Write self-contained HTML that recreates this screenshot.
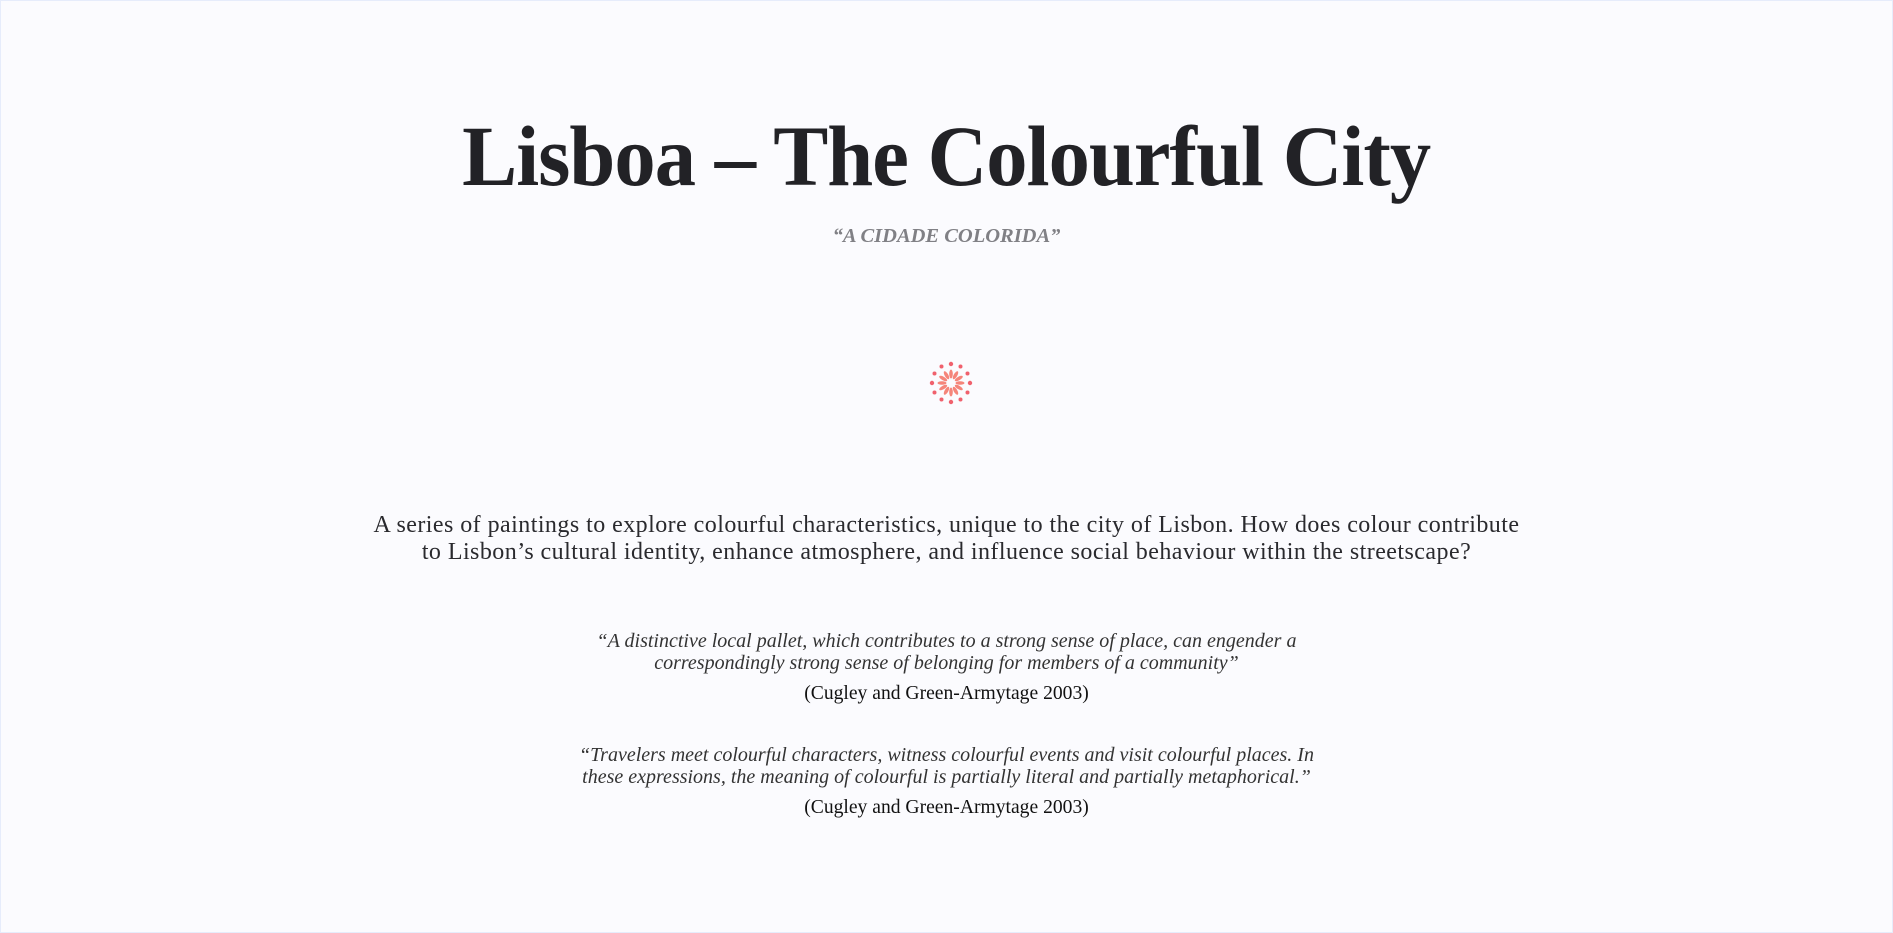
<!DOCTYPE html>
<html><head><meta charset="utf-8"><style>
html,body{margin:0;padding:0;}
body{width:1893px;height:933px;background:#fbfbfe;position:relative;overflow:hidden;font-family:"Liberation Serif",serif;color:#222;}
.frame{position:absolute;inset:0;border:1px solid #e6ecfb;box-sizing:border-box;}
.c{position:absolute;left:0;width:1893px;text-align:center;white-space:nowrap;}
h1{margin:0;font-size:86px;font-weight:bold;letter-spacing:-1px;color:#222226;}
</style></head><body><div class="frame"></div>
<div class="c" style="top:106px;"><h1 style="display:inline-block;transform:scaleX(0.96);">Lisboa – The Colourful City</h1></div>
<div class="c" style="top:225px;font-size:20.5px;font-style:italic;color:#808085;font-weight:bold;">“A CIDADE COLORIDA”</div>
<svg style="position:absolute;left:929px;top:361px" width="44" height="44" viewBox="-22 -22 44 44">
<g fill="#f0616d">
<circle cx="0" cy="-19" r="2.2"/><circle cx="9.5" cy="-16.5" r="2"/><circle cx="16.5" cy="-9.5" r="2"/><circle cx="19" cy="0" r="2.2"/><circle cx="16.5" cy="9.5" r="2"/><circle cx="9.5" cy="16.5" r="2"/><circle cx="0" cy="19" r="2.2"/><circle cx="-9.5" cy="16.5" r="2"/><circle cx="-16.5" cy="9.5" r="2"/><circle cx="-19" cy="0" r="2.2"/><circle cx="-16.5" cy="-9.5" r="2"/><circle cx="-9.5" cy="-16.5" r="2"/>
</g>
<g fill="#f5857a">
<ellipse cx="0" cy="-9" rx="1.8" ry="4.5"/><ellipse cx="0" cy="-9" rx="1.8" ry="4.5" transform="rotate(30)"/><ellipse cx="0" cy="-9" rx="1.8" ry="4.5" transform="rotate(60)"/><ellipse cx="0" cy="-9" rx="1.8" ry="4.5" transform="rotate(90)"/><ellipse cx="0" cy="-9" rx="1.8" ry="4.5" transform="rotate(120)"/><ellipse cx="0" cy="-9" rx="1.8" ry="4.5" transform="rotate(150)"/><ellipse cx="0" cy="-9" rx="1.8" ry="4.5" transform="rotate(180)"/><ellipse cx="0" cy="-9" rx="1.8" ry="4.5" transform="rotate(210)"/><ellipse cx="0" cy="-9" rx="1.8" ry="4.5" transform="rotate(240)"/><ellipse cx="0" cy="-9" rx="1.8" ry="4.5" transform="rotate(270)"/><ellipse cx="0" cy="-9" rx="1.8" ry="4.5" transform="rotate(300)"/><ellipse cx="0" cy="-9" rx="1.8" ry="4.5" transform="rotate(330)"/>
</g></svg>
<div class="c" style="top:512px;font-size:24px;letter-spacing:0.45px;line-height:27px;color:#2a2a2e;">A series of paintings to explore colourful characteristics, unique to the city of Lisbon. How does colour contribute<br>to Lisbon’s cultural identity, enhance atmosphere, and influence social behaviour within the streetscape?</div>
<div class="c" style="top:630px;font-size:20px;line-height:22px;font-style:italic;color:#333;">“A distinctive local pallet, which contributes to a strong sense of place, can engender a<br>correspondingly strong sense of belonging for members of a community”</div>
<div class="c" style="top:683px;font-size:19.6px;color:#111;">(Cugley and Green-Armytage 2003)</div>
<div class="c" style="top:744px;font-size:20px;line-height:22px;font-style:italic;color:#333;">“Travelers meet colourful characters, witness colourful events and visit colourful places. In<br>these expressions, the meaning of colourful is partially literal and partially metaphorical.”</div>
<div class="c" style="top:797px;font-size:19.6px;color:#111;">(Cugley and Green-Armytage 2003)</div>
</body></html>
